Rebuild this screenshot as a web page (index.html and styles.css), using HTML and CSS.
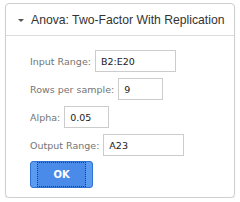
FILE: index.html
```html
<!DOCTYPE html>
<html lang="en">
<head>
<meta charset="UTF-8">
<meta name="viewport" content="width=device-width, initial-scale=1.0">
<title>Anova: Two-Factor With Replication</title>
<link rel="stylesheet" href="styles.css">
</head>
<body>
<div class="panel">
    <div class="panel-head">
        <span class="caret"></span>
        <span class="title">Anova: Two-Factor With Replication</span>
    </div>
    <div class="panel-body">
        <div class="row">
            <label for="inputRange">Input Range:</label>
            <input class="field wide" id="inputRange" value="B2:E20">
        </div>
        <div class="row">
            <label for="rows">Rows per sample:</label>
            <input class="field short" id="rows" value="9">
        </div>
        <div class="row">
            <label for="alpha">Alpha:</label>
            <input class="field short" id="alpha" value="0.05">
        </div>
        <div class="row">
            <label for="outputRange">Output Range:</label>
            <input class="field wide" id="outputRange" value="A23">
        </div>
        <button class="ok"><span>OK</span></button>
    </div>
</div>
</body>
</html>
```

FILE: styles.css
```css
body {
    margin: 0;
    background-color: #ffffff;
    font-family: 'DejaVu Sans', sans-serif;
}
.panel {
    margin: 3px 0 0 5px;
    width: 228px;
    height: 193px;
    border: 1px solid #cfcfcf;
    border-radius: 4px;
    box-shadow: 0 1px 1px rgba(0, 0, 0, 0.12);
}
.panel-head {
    height: 31px;
    border-bottom: 1px solid #dddddd;
    display: flex;
    align-items: center;
    padding-left: 12px;
}
.caret {
    width: 0;
    height: 0;
    border-left: 3px solid transparent;
    border-right: 3px solid transparent;
    border-top: 3px solid #555555;
    margin-right: 7px;
    margin-top: 1px;
}
.title {
    font-family: 'Liberation Sans', Arial, sans-serif;
    font-size: 12.2px;
    color: #333333;
}
.panel-body {
    padding: 14px 0 0 24px;
}
.row {
    display: flex;
    align-items: center;
    gap: 4px;
    margin-bottom: 6px;
}
.row label {
    font-size: 9.5px;
    color: #747474;
}
.field {
    box-sizing: border-box;
    height: 22px;
    border: 1px solid #cccccc;
    padding: 0 0 0 5px;
    font-family: 'DejaVu Sans', sans-serif;
    font-size: 9.5px;
    color: #1a1a1a;
    outline: none;
}
.wide {
    width: 81px;
}
.short {
    width: 45px;
}
.ok {
    margin-top: -1px;
    width: 63px;
    height: 27px;
    padding: 0 6px;
    border: 1px solid #2f72d2;
    border-radius: 3px;
    background-color: #5b9bef;
    cursor: pointer;
}
.ok span {
    display: flex;
    align-items: center;
    justify-content: center;
    height: 25px;
    background-color: #4a8ae8;
    border: 1px dotted #1c3f78;
    box-sizing: border-box;
    color: #ffffff;
    font-family: 'DejaVu Sans', sans-serif;
    font-weight: bold;
    font-size: 10px;
}
```
